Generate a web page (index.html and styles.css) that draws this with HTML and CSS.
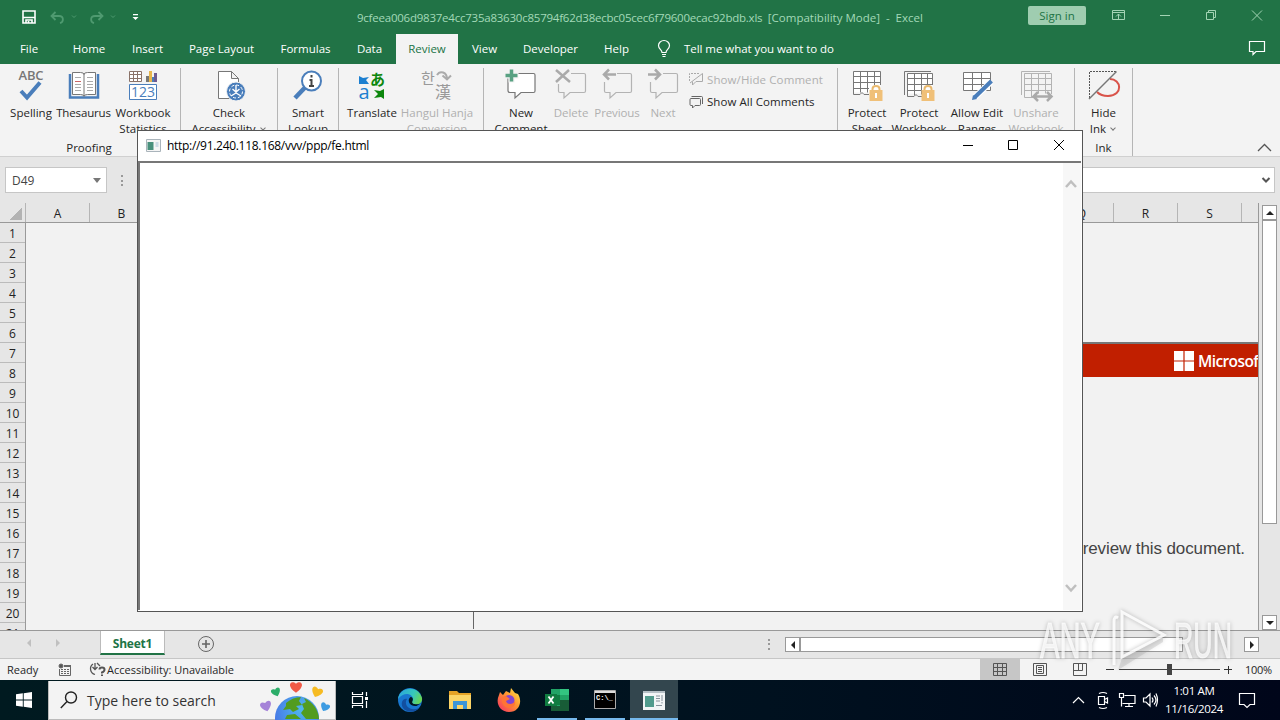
FILE: index.html
```html
<!DOCTYPE html>
<html lang="en">
<head>
    <meta charset="UTF-8">
    <meta name="viewport" content="width=device-width, initial-scale=1.0">
    <title>Excel</title>
    <link rel="stylesheet" href="styles.css">
</head>
<body>
    <div class="titlebar">
        <div class="quick-access">
            <svg width="14" height="14" viewBox="0 0 14 14" fill="none" stroke="#fff" stroke-width="1.6"><path d="M1 1h12v12H1zM1.500 7.500h11M4 13v-3h6v3"/><path d="M6.500 11v2"/></svg>
            <svg class="undo" width="15" height="13" viewBox="0 0 15 13" fill="none" stroke="#4f9a70" stroke-width="1.8"><path d="M5.500 1L1.500 5l4 4M2 5h7c5 0 5 6 1 7.200"/></svg>
            <svg class="small-arrow" width="6" height="4" viewBox="0 0 6 4" fill="none" stroke="#4f9a70"><path d="M1 .5l2 2 2-2"/></svg>
            <svg class="redo" width="15" height="13" viewBox="0 0 15 13" fill="none" stroke="#4f9a70" stroke-width="1.8"><path d="M9.500 1l4 4-4 4M13 5H6c-5 0-5 6-1 7.200"/></svg>
            <svg class="small-arrow" width="6" height="4" viewBox="0 0 6 4" fill="none" stroke="#4f9a70"><path d="M1 .5l2 2 2-2"/></svg>
            <svg class="customize" width="7" height="7" viewBox="0 0 7 7"><path d="M1 0h5v1.300H1zM.5 3h6l-3 3z" fill="#fff"/></svg>
        </div>
        <div class="file-name">9cfeea006d9837e4cc735a83630c85794f62d38ecbc05cec6f79600ecac92bdb.xls&nbsp; <span class="mode">[Compatibility Mode]&nbsp; -&nbsp; Excel</span></div>
        <div class="sign-in">Sign in</div>
        <svg class="window-controls" width="156" height="14" viewBox="0 0 156 14" fill="none" stroke="#a3d4b4">
            <path d="M.5 2.500h12v9H.5zM.5 4.500h12M6.500 11V6M4 8.500L6.500 6 9 8.500"/>
            <path d="M48 7.500h10"/>
            <path d="M94.500 4.500h7v7h-7zM96.500 4.500v-2h7v7h-2"/>
            <path d="M140 2.500l10 10M150 2.500l-10 10"/>
        </svg>
    </div>

    <div class="tabs">
        <div class="tab tab-file">File</div>
        <div class="tab tab-home">Home</div>
        <div class="tab tab-insert">Insert</div>
        <div class="tab tab-layout">Page Layout</div>
        <div class="tab tab-formulas">Formulas</div>
        <div class="tab tab-data">Data</div>
        <div class="tab tab-review active">Review</div>
        <div class="tab tab-view">View</div>
        <div class="tab tab-developer">Developer</div>
        <div class="tab tab-help">Help</div>
        <svg class="bulb" width="14" height="18" viewBox="0 0 14 18" fill="none" stroke="#fff" stroke-width="1.2"><path d="M5 12.500c0-3-3.500-3.500-3.500-7a5.500 5 0 0 1 11 0c0 3.500-3.500 4-3.500 7zM5 14.500h4M5.500 16.500h3"/></svg>
        <div class="tell-me">Tell me what you want to do</div>
        <svg class="comments-button" width="18" height="16" viewBox="0 0 18 16" fill="none" stroke="#fff" stroke-width="1.2"><path d="M1.500 1.500h15v10H8l-3 3v-3H1.500z"/></svg>
    </div>

    <div class="ribbon">
        <div class="group group-proofing">
            <div class="buttons">
                <div class="button b52">
                    <svg class="icon" width="34" height="34" viewBox="0 0 34 34"><text x="4.500" y="11" class="abc" textLength="25">ABC</text><path d="M7 22l6 6.500L26 13.500" fill="none" stroke="#4a7ebb" stroke-width="4"/></svg>
                    <span>Spelling</span>
                </div>
                <div class="button b53">
                    <svg class="icon" width="34" height="34" viewBox="0 0 34 34" fill="none"><path d="M3 5v23.500h28V5" stroke="#4a7ebb" stroke-width="2.500"/><path d="M5.500 3.500h8q3.500 0 3.500 2 0-2 3.500-2h8v22h-8q-3.500 0-3.500 2 0-2-3.500-2h-8z" fill="#fff" stroke="#777"/><path d="M17 5v22" stroke="#777"/><path d="M8 8.500h6M8 15.500h6M8 18.500h6M8 21.500h6M20 8.500h6M20 12.500h6M20 15.500h6M20 18.500h6M20 21.500h6" stroke="#aaa"/><path d="M8 12.500h6" stroke="#c66"/></svg>
                    <span>Thesaurus</span>
                </div>
                <div class="button b66">
                    <svg class="icon" width="34" height="34" viewBox="0 0 34 34" fill="none"><path d="M3.500 2.500h12v10h-12zM3.500 5.500h12M3.500 9.500h12M7.500 2.500v10M11.500 2.500v10" fill="#fff" stroke="#8a7268"/><path d="M20 7h3v6h-3z" fill="#777"/><path d="M23 2h3v11h-3z" fill="#e8b64c"/><path d="M26 8h2v5h-2z" fill="#4a7ebb"/><path d="M28 4h3v9h-3z" fill="#6d5b91"/><path d="M3.500 15.500h27v15h-27z" fill="#fff" stroke="#4a7ebb"/><text x="5" y="28" class="digits" textLength="24">123</text></svg>
                    <span>Workbook<br>Statistics</span>
                </div>
            </div>
            <div class="group-name">Proofing</div>
        </div>
        <div class="group group-accessibility">
            <div class="buttons">
                <div class="button b96">
                    <svg class="icon" width="34" height="34" viewBox="0 0 34 34" fill="none"><path d="M6.500 2.500h13l7 7v20h-20zM19.500 2.500v7h7" fill="#fff" stroke="#777"/><circle cx="24" cy="22.500" r="9.500" fill="#4a7ebb" stroke="#f3f3f3"/><circle cx="24" cy="22.500" r="6.500" stroke="#fff" stroke-dasharray="3 2"/><path d="M24 16v7M20.500 20l3.500 3 3.500-3M19 27l5-3 5 3" stroke="#fff" stroke-width="1.4"/></svg>
                    <span>Check<br>Accessibility <i class="caret"></i></span>
                </div>
            </div>
        </div>
        <div class="group group-insights">
            <div class="buttons">
                <div class="button b60">
                    <svg class="icon" width="34" height="34" viewBox="0 0 34 34" fill="none"><path d="M14 18.500L4 29" stroke="#4a7ebb" stroke-width="4.5"/><circle cx="20.500" cy="12" r="9.500" fill="#fff" stroke="#4a7ebb" stroke-width="2"/><path d="M20.500 6v2.500M18.500 11h2v6M18 17h5" stroke="#444" stroke-width="2"/></svg>
                    <span>Smart<br>Lookup</span>
                </div>
            </div>
        </div>
        <div class="group group-language">
            <div class="buttons">
                <div class="button b66">
                    <svg class="icon" width="34" height="34" viewBox="0 0 34 34"><text x="15" y="16" class="kana">あ</text><text x="3.500" y="30" class="latin-a">a</text><path d="M4 7l4 2 6-1-3 3 3 4H4z" fill="#1c7fd0"/><path d="M29 20v10l-3-2-7 1 4-4-4-4 6 1z" fill="#0d870d"/></svg>
                    <span>Translate</span>
                </div>
                <div class="button b64 disabled">
                    <svg class="icon" width="34" height="34" viewBox="0 0 34 34"><text x="1" y="15" class="hangul">한</text><text x="15" y="29" class="hanja">漢</text><path d="M17 6c3-5 10-3 10 4M22.500 6.500l4.500 4 4-4" fill="none" stroke="#aaa" stroke-width="2"/></svg>
                    <span>Hangul Hanja<br>Conversion</span>
                </div>
            </div>
        </div>
        <div class="group group-comments">
            <div class="buttons">
                <div class="button b64">
                    <svg class="icon" width="34" height="34" viewBox="0 0 34 34"><path d="M5.500 4.500h24q1.500 0 1.500 1.500v16q0 1.500-1.500 1.500H17L11 29v-5.500H6q-2 0-2-2v-15q0-2 1.500-2z" fill="#fff" stroke="#777" stroke-width="1.2"/><path d="M7.500 0v13.500M1 6.500h13.500" stroke="#f3f3f3" stroke-width="6"/><path d="M7.500.5v12M1.500 6.500h12" stroke="#58a182" stroke-width="3.5"/></svg>
                    <span>New<br>Comment</span>
                </div>
                <div class="button b36 disabled">
                    <svg class="icon" width="34" height="34" viewBox="0 0 34 34" fill="none"><path d="M17 4.500h13q1.500 0 1.500 1.500v16q0 1.500-1.500 1.500H16L10 29v-5.500H6q-1.500 0-1.500-1.500v-7" stroke="#b3b3b3" stroke-width="1.2"/><path d="M2 1l14 12M15 1L2 13" stroke="#aaa" stroke-width="2.5"/></svg>
                    <span>Delete</span>
                </div>
                <div class="button b56 disabled">
                    <svg class="icon" width="34" height="34" viewBox="0 0 34 34" fill="none"><path d="M17 4.500h13q1.500 0 1.500 1.500v16q0 1.500-1.500 1.500H16L10 29v-5.500H6q-1.500 0-1.500-1.500v-9" stroke="#b3b3b3" stroke-width="1.2"/><path d="M16 5.500H4M9 .5l-5 5 5 5" stroke="#aaa" stroke-width="2.5"/></svg>
                    <span>Previous</span>
                </div>
                <div class="button b36 disabled">
                    <svg class="icon" width="34" height="34" viewBox="0 0 34 34" fill="none"><path d="M17 4.500h13q1.500 0 1.500 1.500v16q0 1.500-1.500 1.500H16L10 29v-5.500H6q-1.500 0-1.500-1.500v-9" stroke="#b3b3b3" stroke-width="1.2"/><path d="M2 5.500h12M9 .5l5 5-5 5" stroke="#aaa" stroke-width="2.5"/></svg>
                    <span>Next</span>
                </div>
                <div class="comment-options">
                    <div class="option disabled">
                        <svg width="15" height="14" viewBox="0 0 15 14" fill="none" stroke="#aaa"><path d="M.5 9V1.500h10" stroke-dasharray="2 1"/><path d="M1 11L13.500 1.500v8H7L3.500 13V9.500"/></svg>
                        <span>Show/Hide Comment</span>
                    </div>
                    <div class="option show-all">
                        <svg width="15" height="14" viewBox="0 0 15 14" fill="none" stroke="#666"><path d="M2 3.500h8.500q1 0 1 1v5q0 1-1 1H6L3.500 13v-2.500H2q-1 0-1-1v-5q0-1 1-1zM2.500 1.500h10q1 0 1 1v6.500"/></svg>
                        <span>Show All Comments</span>
                    </div>
                </div>
            </div>
        </div>
        <div class="group group-protect">
            <div class="buttons">
                <div class="button b52">
                    <svg class="icon" width="34" height="34" viewBox="0 0 34 34" fill="none"><path d="M3.500 2.500h27v21h-27z" fill="#fff"/><path d="M19 25.500h-5l-2-2-2 2H3.500v-23h27V16M3.500 7.500h27M3.500 13.500h27M3.500 19.500H19M10.500 2.500v21M17.500 2.500v21M24.500 2.500V16" stroke="#777"/><path d="M22.500 22v-2q0-3 3.500-3t3.500 3v2" stroke="#e9b96e" stroke-width="2"/><path d="M19.500 21h13v11h-13z" fill="#f0c078"/><path d="M26 24v5" stroke="#fff" stroke-width="2"/></svg>
                    <span>Protect<br>Sheet</span>
                </div>
                <div class="button b52">
                    <svg class="icon" width="34" height="34" viewBox="0 0 34 34" fill="none"><path d="M5.500 4.500h25v20h-25z" fill="#fff"/><path d="M2.500 26V2.500H29M20 27.500h-4l-2-2-2 2H5.500v-23h25V16M5.500 9.500h25M5.500 15.500h25M5.500 21.500H19M12.500 4.500v22M19.500 4.500v21M25.500 4.500V16" stroke="#777"/><path d="M22.500 22v-2q0-3 3.500-3t3.500 3v2" stroke="#e9b96e" stroke-width="2"/><path d="M19.500 21h13v11h-13z" fill="#f0c078"/><path d="M26 24v5" stroke="#fff" stroke-width="2"/></svg>
                    <span>Protect<br>Workbook</span>
                </div>
                <div class="button b64">
                    <svg class="icon" width="34" height="34" viewBox="0 0 34 34" fill="none"><path d="M3.500 3.500h27v18h-27zM3.500 9.500h27M3.500 15.500h27M12.500 3.500v18M21.500 3.500v18" fill="#fff" stroke="#777"/><path d="M31 13L15 28" stroke="#fff" stroke-width="6"/><path d="M31.500 12L14.500 28.500" stroke="#4a7ebb" stroke-width="4"/><path d="M12 31l1-5 4 4z" fill="#4a7ebb"/></svg>
                    <span>Allow Edit<br>Ranges</span>
                </div>
                <div class="button b54 disabled">
                    <svg class="icon" width="34" height="34" viewBox="0 0 34 34" fill="none"><path d="M2.500 26V2.500H31M14 28.500H5.500v-24h27V25M5.500 9.500h27M5.500 15.500h27M5.500 21.500h27M12.500 4.500v24M19.500 4.500v20M26.500 4.500v20" stroke="#b3b3b3"/><path d="M15 27.500h16M19 23l-4.500 4.500L19 32M28 23l4.500 4.500L28 32" stroke="#aaa" stroke-width="2.5"/></svg>
                    <span>Unshare<br>Workbook</span>
                </div>
            </div>
        </div>
        <div class="group group-ink">
            <div class="buttons">
                <div class="button b57">
                    <svg class="icon" width="34" height="34" viewBox="0 0 34 34" fill="none"><path d="M2.500 29V2.500H29" stroke="#555" stroke-dasharray="2 1"/><path d="M23 10c11 0 14 16-2 17-6 0-9-2-11-4" stroke="#d9534a" stroke-width="2"/><path d="M2 30L29.500 2.500" stroke="#777" stroke-width="1.5"/></svg>
                    <span>Hide<br>Ink <i class="caret"></i></span>
                </div>
            </div>
            <div class="group-name">Ink</div>
        </div>
        <svg class="collapse" width="15" height="9" viewBox="0 0 15 9" fill="none" stroke="#555" stroke-width="1.3"><path d="M1 8l6.500-6.500L14 8"/></svg>
    </div>

    <div class="formula-bar">
        <div class="name-box">D49 <i class="name-arrow"></i></div>
        <div class="grip"></div>
        <div class="formula-input"><svg width="8" height="6" viewBox="0 0 8 6" fill="none" stroke="#555" stroke-width="2"><path d="M.5 1L4 4.500 7.500 1"/></svg></div>
    </div>

    <div class="workarea">
        <div class="grid">
            <div class="columns">
                <div class="corner"></div>
                <div>A</div><div>B</div><div>C</div><div>D</div><div>E</div><div>F</div><div>G</div><div>H</div><div>I</div><div>J</div><div>K</div><div>L</div><div>M</div><div>N</div><div>O</div><div>P</div><div>Q</div><div>R</div><div>S</div>
            </div>
            <div class="cells">
                <div class="rows">
                    <div>1</div><div>2</div><div>3</div><div>4</div><div>5</div><div>6</div><div>7</div><div>8</div><div>9</div><div>10</div><div>11</div><div>12</div><div>13</div><div>14</div><div>15</div><div>16</div><div>17</div><div>18</div><div>19</div><div>20</div><div>21</div>
                </div>
                <div class="document">
                    <div class="banner">
                        <svg width="20" height="20" viewBox="0 0 20 20" fill="#fff"><path d="M0 0h9.400v9.400H0zM10.600 0H20v9.400h-9.400zM0 10.600h9.400V20H0zM10.600 10.600H20V20h-9.400z"/></svg>
                        <span>Microsoft</span>
                    </div>
                    <p>review this document.</p>
                </div>
            </div>
        </div>
        <div class="vertical-scroll">
            <div class="scroll-button"><i class="arrow-up"></i></div>
            <div class="vertical-thumb"></div>
            <div class="scroll-button scroll-end"><i class="arrow-down"></i></div>
        </div>
    </div>

    <div class="sheet-bar">
        <i class="sheet-prev"></i>
        <i class="sheet-next"></i>
        <div class="sheet-tab">Sheet1</div>
        <svg class="add-sheet" width="18" height="18" viewBox="0 0 18 18" fill="none" stroke="#666"><circle cx="9" cy="9" r="7.500"/><path d="M9 5v8M5 9h8" stroke-width="1.6"/></svg>
        <div class="grip bar-grip"></div>
        <div class="horizontal-scroll">
            <div class="scroll-button"><i class="arrow-left"></i></div>
            <div class="horizontal-thumb"></div>
            <div class="scroll-button scroll-right"><i class="arrow-right"></i></div>
        </div>
    </div>

    <div class="status-bar">
        <span class="ready">Ready</span>
        <svg class="macro" width="14" height="14" viewBox="0 0 14 14" fill="none" stroke="#666"><path d="M1.500 6v6.500h11v-10H7"/><path d="M6 3h7" stroke-width="2"/><path d="M3 6.500h8M3 8.500h8M3 10.500h8" stroke-dasharray="2 1"/><circle cx="3" cy="3" r="2" fill="#555"/></svg>
        <svg class="access-icon" width="17" height="15" viewBox="0 0 17 15" fill="none" stroke="#555" stroke-width="1.3"><path d="M4 2C0 5 1 11 6 12.500M6 1v6M3.500 5L6 7.500 8.500 5M8 1l3 3"/><path d="M10.500 7.500q0-2 2.500-2t2.500 2-2.500 3v1M13 12.500V14" stroke-width="2"/></svg>
        <span class="access-text">Accessibility: Unavailable</span>
        <div class="views">
            <div class="view-active"><svg width="14" height="14" viewBox="0 0 14 14" fill="none" stroke="#555"><path d="M.5.5h13v12H.5zM.5 4.500h13M.5 8.500h13M4.500.5v12M9.500.5v12"/></svg></div>
            <div><svg width="14" height="14" viewBox="0 0 14 14" fill="none" stroke="#555"><path d="M.5.5h13v12H.5zM3.500 2.500h7v8h-7zM5 4.500h4M5 6.500h4M5 8.500h4"/></svg></div>
            <div><svg width="14" height="14" viewBox="0 0 14 14" fill="none" stroke="#555"><path d="M.5.5h13v12H.5zM.5 7.500h9v-7M5.500.5v7"/></svg></div>
        </div>
        <div class="zoom">
            <i class="zoom-minus"></i>
            <div class="zoom-track"><i></i></div>
            <svg width="8" height="8" viewBox="0 0 8 8" stroke="#333"><path d="M0 3.500h8M4.500 0v8"/></svg>
            <span>100%</span>
        </div>
    </div>

    <div class="taskbar">
        <div class="start"><svg width="16" height="16" viewBox="0 0 16 16" fill="#fff"><path d="M0 2.300L6.800 1.300v6.200H0zM7.700 1.200L16 0v7.500H7.700zM0 8.400h6.800v6.300L0 13.700zM7.700 8.400H16V16l-8.300-1.200z"/></svg></div>
        <div class="search">
            <svg width="18" height="18" viewBox="0 0 18 18" fill="none" stroke="#222" stroke-width="1.4"><circle cx="11" cy="6.500" r="5.500"/><path d="M7 10.500L.8 17"/></svg>
            <span>Type here to search</span>
            <svg class="globe" width="74" height="38" viewBox="0 0 74 38">
                <defs>
                    <radialGradient id="ocean" cx=".6" cy=".3" r=".8"><stop offset="0" stop-color="#4fb8ee"/><stop offset="1" stop-color="#4569e4"/></radialGradient>
                    <path id="heart" d="M0 4.500C-8-1-4-6 0-2.500 4-6 8-1 0 4.500z"/>
                </defs>
                <circle cx="36" cy="37" r="22" fill="url(#ocean)"/>
                <path d="M25 22q7-6 15-6l-2 4 3 4-6 1 3 3-6 3-3-3-7 1 3-4zM43 17q14 7 15 21H45l-5-6 3-4-2-5 4-2zM26 34l8-1 6 5H24z" fill="#529c1f"/>
                <use href="#heart" transform="translate(35 6) scale(1.3)" fill="#f05a47"/>
                <use href="#heart" transform="translate(15 11) rotate(-22)" fill="#2cad69"/>
                <use href="#heart" transform="translate(56 11) rotate(22) scale(1.2)" fill="#f6bb22"/>
                <use href="#heart" transform="translate(5 25) rotate(-15) scale(1.2)" fill="#a583d8"/>
                <use href="#heart" transform="translate(64 26) rotate(25)" fill="#3e9ce2"/>
            </svg>
        </div>
        <div class="task"><svg width="18" height="18" viewBox="0 0 18 18" fill="none" stroke="#fff" stroke-width="1.2"><path d="M1.500 1v2.500h10V1M1.500 5.500h10v7h-10zM1.500 17v-2.500h10V17M15.500 1v4M15.500 10v7"/><path d="M14 6h3v3h-3z" fill="#fff" stroke="none"/></svg></div>
        <div class="task edge">
            <svg width="24" height="24" viewBox="0 0 24 24">
                <defs>
                    <linearGradient id="edge-top" x1="0" y1=".3" x2="1" y2=".6"><stop offset="0" stop-color="#2aa7dc"/><stop offset=".6" stop-color="#37c7ba"/><stop offset="1" stop-color="#6bd64f"/></linearGradient>
                </defs>
                <circle cx="12" cy="12" r="12" fill="#1877cf"/>
                <path d="M0 11C1-1 20-4 24 10c1 6-6 8-10 5-1-1 1-2 1-4 0-5-9-8-15 0z" fill="url(#edge-top)"/>
                <path d="M9 11c-4 6 3 13 12 9-4 5-12 5-16 0-3-5 0-10 4-9z" fill="#124fa0"/>
                <path d="M12.500 9c-4 3-1 10 6 9l5-3c-3 2-11 2-9-2 1-2 0-4-2-4z" fill="#001722"/>
            </svg>
        </div>
        <div class="task"><svg width="22" height="20" viewBox="0 0 22 20"><path d="M0 1h8l2 2h12v16H0z" fill="#e5a326"/><path d="M0 5h22v14H0z" fill="#fbd567"/><path d="M4 11h14v8h-4v-4H8v4H4z" fill="#3b95d7"/></svg></div>
        <div class="task"><svg width="24" height="24" viewBox="0 0 24 24">
            <defs><linearGradient id="fox" x1="1" y1="0" x2="0" y2="1"><stop offset="0" stop-color="#fff04a"/><stop offset=".45" stop-color="#ff9330"/><stop offset="1" stop-color="#f52b68"/></linearGradient></defs>
            <path d="M14 0l4 5 3 1c5 8 1 18-9 18C3 24-2 15 2 7l1-3 3 3 3-4 4 2z" fill="url(#fox)"/><circle cx="12" cy="12.500" r="5.500" fill="#8345d0"/><path d="M5 9l4-1 4 3-4 2c1 4 7 4 9 0 1 5-3 7-6 7-5 0-8-5-7-11z" fill="#ff7435"/>
        </svg></div>
        <div class="task running"><svg width="24" height="22" viewBox="0 0 24 22"><path d="M6 0h18v22H6z" fill="#21a366"/><path d="M15 0h9v6h-9z" fill="#33c481"/><path d="M6 6h9v10H6z" fill="#107c41"/><path d="M15 11h9v11H6v-5h9z" fill="#185c37"/><path d="M0 5h12v12H0z" fill="#107c41"/><path d="M3.500 7.500l5 7M8.500 7.500l-5 7" stroke="#fff" stroke-width="1.8"/></svg></div>
        <div class="task running"><svg width="22" height="20" viewBox="0 0 22 20"><path d="M.5.5h21v18H.5z" fill="#000" stroke="#aaa"/><path d="M1 1h20v2H1z" fill="#ddd"/><text x="2" y="10" class="prompt">C:\_</text></svg></div>
        <div class="task running selected"><svg width="22" height="19" viewBox="0 0 22 19"><path d="M0 0h22v19H0z" fill="#f2f5f6"/><path d="M0 0h22v2H0z" fill="#b5bfc5"/><path d="M2 5h9v11H2z" fill="#519b8d"/><path d="M13 5h4M13 7.500h4M13 10h4M19 4v6M19 11v1.500M13 14.500h6" stroke="#86929b"/></svg></div>
        <div class="tray">
            <svg width="86" height="18" viewBox="0 0 86 18" fill="none" stroke="#fff" stroke-width="1.2">
                <path d="M1 12l5.500-5.500L12 12"/>
                <path d="M26.500 5.500h6v8h-6zM32.500 8.500l3-1.500v5l-3-1.500M27 2.500q4-2 8 0M27 16.500q4 2 8 0"/>
                <path d="M52.500 4.500H63v8H50.500M53 15.500h8M57 12.500v3M47.500 2.500h4v4h-4zM49.500 6.500v9"/>
                <path d="M71.500 7H74l4-4v12l-4-4h-2.500zM80 6.500q2 2.500 0 5M82 4.500q4 4.500 0 9M84 2.500q3 6.500 0 13"/>
            </svg>
            <div class="clock">1:01 AM<br>11/16/2024</div>
            <svg class="notify" width="18" height="17" viewBox="0 0 18 17" fill="none" stroke="#fff" stroke-width="1.2"><path d="M1.500 1.500h15v11h-4.500l-3 3-3-3H1.500z"/></svg>
        </div>
    </div>

    <div class="popup">
        <div class="popup-title">
            <svg width="15" height="13" viewBox="0 0 15 13"><path d="M.5.5h14v12H.5z" fill="#f5f5f5" stroke="#aab4bb"/><path d="M1.500 3h6v8h-6z" fill="#49907c"/><path d="M9.500 3h3v5h-3z" fill="#cddbe5"/></svg>
            <span>http://91.240.118.168/vvv/ppp/fe.html</span>
            <svg class="popup-controls" width="104" height="12" viewBox="0 0 104 12" fill="none" stroke="#000"><path d="M0 6.500h10M45.500 1.500h9v9h-9zM91 1l10 10M101 1L91 11"/></svg>
        </div>
        <div class="popup-page">
            <div class="popup-scroll">
                <svg width="12" height="9" viewBox="0 0 12 9" fill="none" stroke="#bfbfbf" stroke-width="2.5"><path d="M1 8l5-5.500L11 8"/></svg>
                <svg width="12" height="9" viewBox="0 0 12 9" fill="none" stroke="#bfbfbf" stroke-width="2.5"><path d="M1 1l5 5.500L11 1"/></svg>
            </div>
        </div>
    </div>

    <svg class="watermark" width="200" height="68" viewBox="0 0 200 68">
        <g fill="#fff" fill-opacity=".75" stroke="#fff" stroke-opacity=".6">
            <text x="4" y="50" textLength="60" lengthAdjust="spacingAndGlyphs">ANY</text>
            <text x="138" y="50" textLength="58" lengthAdjust="spacingAndGlyphs">RUN</text>
        </g>
        <path d="M86 50l41-22v6L82 62z" fill="#999" fill-opacity=".25"/>
        <path d="M86 4l42 23-42 22zM78 57V14q0-7 4-4" fill="none" stroke="#fff" stroke-opacity=".85" stroke-width="3"/>
    </svg>
</body>
</html>
```
FILE: styles.css
```css
* {
    box-sizing: border-box;
}

body {
    margin: 0;
    width: 1280px;
    height: 720px;
    overflow: hidden;
    position: relative;
    display: flex;
    flex-direction: column;
    background-color: #e6e6e6;
    color: #262626;
    font-family: "Open Sans", "Noto Sans CJK JP", sans-serif;
    font-size: 12px;
    white-space: nowrap;
}

svg {
    display: block;
    flex: none;
    overflow: visible;
}

i {
    display: inline-block;
}

/* title bar */
.titlebar {
    height: 34px;
    flex: none;
    display: flex;
    background-color: #217346;
    color: #a3d9b8;
}

.quick-access {
    width: 357px;
    height: 34px;
    padding-left: 22px;
    display: flex;
    align-items: center;
}

.undo {
    margin-left: 14px;
}

.redo {
    margin-left: 12px;
}

.small-arrow {
    margin-left: 6px;
}

.customize {
    margin-left: 16px;
}

.file-name {
    width: 671px;
    line-height: 35px;
    font-size: 11.5px;
    letter-spacing: -0.23px;
}

.mode {
    letter-spacing: 0;
}

.sign-in {
    width: 58px;
    height: 19px;
    margin-top: 6px;
    border-radius: 2px;
    background-color: #9fcdb0;
    color: #217346;
    font-size: 11.5px;
    line-height: 20px;
    text-align: center;
}

.window-controls {
    margin: 8px 0 0 26px;
}

/* ribbon tabs */
.tabs {
    height: 30px;
    flex: none;
    display: flex;
    background-color: #217346;
    color: #fff;
    font-size: 11.5px;
    line-height: 30px;
}

.tab {
    text-align: center;
}

.tab-file { width: 58px; }
.tab-home { width: 62px; }
.tab-insert { width: 55px; }
.tab-layout { width: 93px; }
.tab-formulas { width: 75px; }
.tab-data { width: 53px; }
.tab-review { width: 62px; }
.tab-view { width: 53px; }
.tab-developer { width: 79px; }
.tab-help { width: 53px; }

.tab.active {
    background-color: #f3f3f3;
    color: #217346;
}

.bulb {
    margin: 6px 13px 0 14px;
}

.tell-me {
    width: 564px;
    letter-spacing: -0.05px;
}

.comments-button {
    margin-top: 6px;
}

/* ribbon */
.ribbon {
    height: 93px;
    flex: none;
    display: flex;
    background-color: #f3f3f3;
    border-bottom: 1px solid #d0d0d0;
    font-size: 11.5px;
}

.group {
    height: 88px;
    margin-top: 4px;
    border-right: 1px solid #b5b5b5;
}

.group-proofing { width: 181px; padding-left: 5px; }
.group-accessibility { width: 97px; }
.group-insights { width: 61px; }
.group-language { width: 145px; }
.group-comments { width: 354px; padding-left: 5px; }
.group-protect { width: 237px; padding-left: 3px; }
.group-ink { width: 58px; }

.buttons {
    height: 72px;
    display: flex;
}

.group-proofing .group-name {
    padding-right: 7px;
}

.button {
    height: 72px;
    display: flex;
    flex-direction: column;
    align-items: center;
    line-height: 16px;
    text-align: center;
}

.b36 { width: 36px; }
.b52 { width: 52px; }
.b53 { width: 53px; letter-spacing: -0.15px; }
.b54 { width: 54px; }
.b56 { width: 56px; letter-spacing: -0.1px; }
.b57 { width: 57px; }
.b60 { width: 60px; }
.b64 { width: 64px; }
.b66 { width: 66px; }
.b96 { width: 96px; }

.icon {
    margin: 1px 0 2px;
}

.disabled {
    color: #b0b0b0;
}

.caret {
    width: 4px;
    height: 4px;
    margin: 0 2px 3px;
    border: solid #777;
    border-width: 0 1px 1px 0;
    transform: rotate(45deg);
}

.group-name {
    text-align: center;
    line-height: 16px;
}

.abc { font: 600 13px "Open Sans", sans-serif; fill: #777; }
.digits { font: 14px "Open Sans", sans-serif; fill: #4a7ebb; }
.kana { font: bold 15px "Noto Sans CJK JP", sans-serif; fill: #0d870d; }
.latin-a { font: 20px "Open Sans", sans-serif; fill: #1c7fd0; }
.hangul { font: 15px "Noto Sans CJK KR", sans-serif; fill: #999; }
.hanja { font: 16px "Noto Sans CJK KR", sans-serif; fill: #999; }
.prompt { font: bold 7px "Liberation Mono", monospace; fill: #fff; }

.comment-options {
    padding-left: 8px;
}

.option {
    height: 22px;
    display: flex;
    align-items: center;
    gap: 3px;
    letter-spacing: 0.1px;
}

.show-all {
    height: 23px;
    letter-spacing: 0.05px;
}

.collapse {
    margin: 79px 0 0 124px;
}

/* formula bar */
.formula-bar {
    height: 46px;
    flex: none;
    display: flex;
    padding: 10px 5px 0;
}

.name-box {
    width: 102px;
    height: 26px;
    padding: 0 5px 0 6px;
    border: 1px solid #c6c6c6;
    background-color: #fff;
    display: flex;
    align-items: center;
    justify-content: space-between;
    color: #444;
}

.name-arrow {
    border: 4px solid transparent;
    border-top: 5px solid #777;
    border-bottom: 0;
}

.grip {
    width: 2px;
    height: 11px;
    margin: 8px 14px 0;
    background: repeating-linear-gradient(#999 0 2px, transparent 2px 4.5px);
}

.formula-input {
    flex: 1;
    height: 26px;
    padding-right: 4px;
    border: 1px solid #c6c6c6;
    background-color: #fff;
    display: flex;
    align-items: center;
    justify-content: flex-end;
}

/* sheet */
.workarea {
    height: 428px;
    flex: none;
    display: flex;
    border-bottom: 1px solid #999;
}

.grid {
    width: 1259px;
    border-right: 1px solid #999;
    overflow: hidden;
}

.columns {
    height: 20px;
    display: flex;
    border-bottom: 1px solid #999;
    line-height: 21px;
    text-align: center;
    color: #222;
}

.columns div {
    width: 64px;
    flex: none;
    border-right: 1px solid #b5b5b5;
}

.columns .corner {
    width: 26px;
    background: linear-gradient(135deg, transparent 50%, #b3b3b3 50%) 10px 5px / 12px 12px no-repeat;
}

.cells {
    height: 407px;
    display: flex;
    background-color: #f2f2f2;
}

.rows {
    width: 26px;
    height: 407px;
    overflow: hidden;
    background-color: #e6e6e6;
    border-right: 1px solid #999;
    text-align: center;
    color: #222;
}

.rows div {
    height: 20px;
    border-bottom: 1px solid #bbb;
    line-height: 21px;
}

.document {
    width: 785px;
    height: 287px;
    margin: 119px 0 0 447px;
    border-left: 1px solid #666;
    border-top: 2px solid #777;
}

.banner {
    height: 33px;
    padding-left: 700px;
    display: flex;
    align-items: center;
    gap: 4px;
    background-color: #c11f00;
    color: #fff;
    font-size: 15.5px;
    font-weight: 600;
    overflow: hidden;
}

.banner span {
    letter-spacing: -0.6px;
}

.document p {
    margin: 162px 13px 0 0;
    font-family: "Liberation Sans", Arial, sans-serif;
    font-size: 17px;
    line-height: 20px;
    letter-spacing: -0.1px;
    text-align: right;
    color: #444;
}

.vertical-scroll {
    width: 16px;
    margin: 2px 0 0 3px;
    display: flex;
    flex-direction: column;
}

.scroll-button {
    width: 15px;
    height: 15px;
    flex: none;
    display: flex;
    align-items: center;
    justify-content: center;
    border: 1px solid #999;
    background-color: #fff;
}

.vertical-thumb {
    width: 15px;
    height: 304px;
    border: 1px solid #999;
    background-color: #fff;
}

.scroll-end {
    margin-top: auto;
}

.arrow-up,
.arrow-down {
    border: 4px solid transparent;
    border-bottom-color: #222;
    border-top: 0;
}

.arrow-down {
    border-top: 4px solid #222;
    border-bottom: 0;
}

.arrow-left,
.arrow-right {
    border: 4px solid transparent;
    border-right-color: #222;
    border-left: 0;
}

.arrow-right {
    border-left: 4px solid #222;
    border-right: 0;
}

/* sheet tabs */
.sheet-bar {
    height: 28px;
    flex: none;
    display: flex;
    border-bottom: 1px solid #c6c6c6;
}

.sheet-prev,
.sheet-next {
    height: 8px;
    margin: 8px 0 0 27px;
    border: 4px solid transparent;
    border-right-color: #c0c0c0;
    border-left: 0;
}

.sheet-next {
    margin-left: 25px;
    border-left: 4px solid #c0c0c0;
    border-right: 0;
}

.sheet-tab {
    width: 65px;
    height: 24px;
    margin-left: 40px;
    border: solid #bbb;
    border-width: 0 1px;
    border-bottom: 2px solid #217346;
    background-color: #fff;
    color: #217346;
    font-weight: bold;
    line-height: 25px;
    text-align: center;
    letter-spacing: -0.2px;
}

.add-sheet {
    margin: 4px 0 0 32px;
}

.bar-grip {
    margin: 8px 15px 0 553px;
}

.horizontal-scroll {
    width: 474px;
    height: 15px;
    margin-top: 6px;
    display: flex;
}

.horizontal-thumb {
    width: 383px;
    border: 1px solid #999;
    background-color: #fff;
}

.scroll-right {
    margin-left: auto;
}

/* status bar */
.status-bar {
    height: 21px;
    flex: none;
    display: flex;
    align-items: center;
    background-color: #f3f3f3;
    font-size: 11px;
}

.ready {
    width: 51px;
    padding-left: 7px;
}

.macro {
    margin-left: 7px;
}

.access-icon {
    margin-left: 17px;
}

.access-text {
    width: 874px;
    margin-left: 1px;
}

.views {
    display: flex;
    margin-left: -1px;
}

.views div {
    width: 40px;
    height: 21px;
    display: flex;
    align-items: center;
    justify-content: center;
}

.views .view-active {
    background-color: #c6c6c6;
}

.zoom {
    display: flex;
    align-items: center;
    margin-left: 6px;
}

.zoom-minus {
    width: 8px;
    height: 1px;
    background-color: #333;
}

.zoom-track {
    width: 101px;
    height: 11px;
    margin: 0 4px 0 5px;
    display: flex;
    justify-content: center;
    background: linear-gradient(#444, #444) 0 5px / 100% 1px no-repeat;
}

.zoom-track i {
    width: 5px;
    height: 11px;
    background-color: #444;
}

.zoom span {
    margin-left: 13px;
    letter-spacing: -0.3px;
}

/* taskbar */
.taskbar {
    height: 40px;
    flex: none;
    display: flex;
    background: linear-gradient(90deg, #001a20, #00111f 60%, #00061a);
    color: #fff;
}

.start {
    width: 48px;
    display: flex;
    align-items: center;
    justify-content: center;
}

.search {
    width: 288px;
    height: 39px;
    margin-top: 1px;
    padding-left: 11px;
    display: flex;
    align-items: center;
    gap: 9px;
    border: 1px solid #bbb;
    border-top: 0;
    background-color: #f3f3f3;
    color: #333;
    font-size: 14px;
}

.search span {
    width: 130px;
}

.globe {
    margin-left: 35px;
}

.task {
    width: 49px;
    height: 40px;
    display: flex;
    align-items: center;
    justify-content: center;
}

.task:nth-child(3) {
    width: 48px;
}

.task.edge {
    width: 51px;
}

.running {
    width: 48px;
    background: linear-gradient(#76b9ed, #76b9ed) center bottom / 40px 2px no-repeat;
}

.running.selected {
    margin-left: 1px;
    background-color: #33464e;
    background-size: 48px 2px;
}

.tray {
    margin-left: auto;
    padding-right: 24px;
    display: flex;
    align-items: center;
}

.clock {
    width: 70px;
    padding-left: 2px;
    margin: 0 10px 0 0;
    font-size: 11.5px;
    line-height: 18px;
    text-align: center;
    letter-spacing: -0.3px;
}

/* browser window over the sheet */
.popup {
    position: absolute;
    left: 137px;
    top: 130px;
    width: 946px;
    height: 482px;
    border: 1px solid #555;
    background-color: #fff;
    display: flex;
    flex-direction: column;
    color: #000;
}

.popup-title {
    height: 30px;
    padding: 0 0 2px 8px;
    display: flex;
    align-items: center;
    gap: 6px;
}

.popup-title span {
    width: 790px;
    letter-spacing: -0.3px;
}

.popup-page {
    flex: 1;
    margin: 0 1px 1px 0;
    border: solid #777;
    border-width: 2px 0 0 2px;
    display: flex;
    justify-content: flex-end;
}

.popup-scroll {
    width: 18px;
    padding: 16px 4px 17px 2px;
    display: flex;
    flex-direction: column;
    justify-content: space-between;
    background-color: #f7f7f7;
}

.watermark {
    position: absolute;
    left: 1036px;
    top: 608px;
    font-family: "Liberation Sans", Arial, sans-serif;
    font-size: 50px;
    filter: drop-shadow(0 0 2px rgba(0, 0, 0, 0.3));
}
```
